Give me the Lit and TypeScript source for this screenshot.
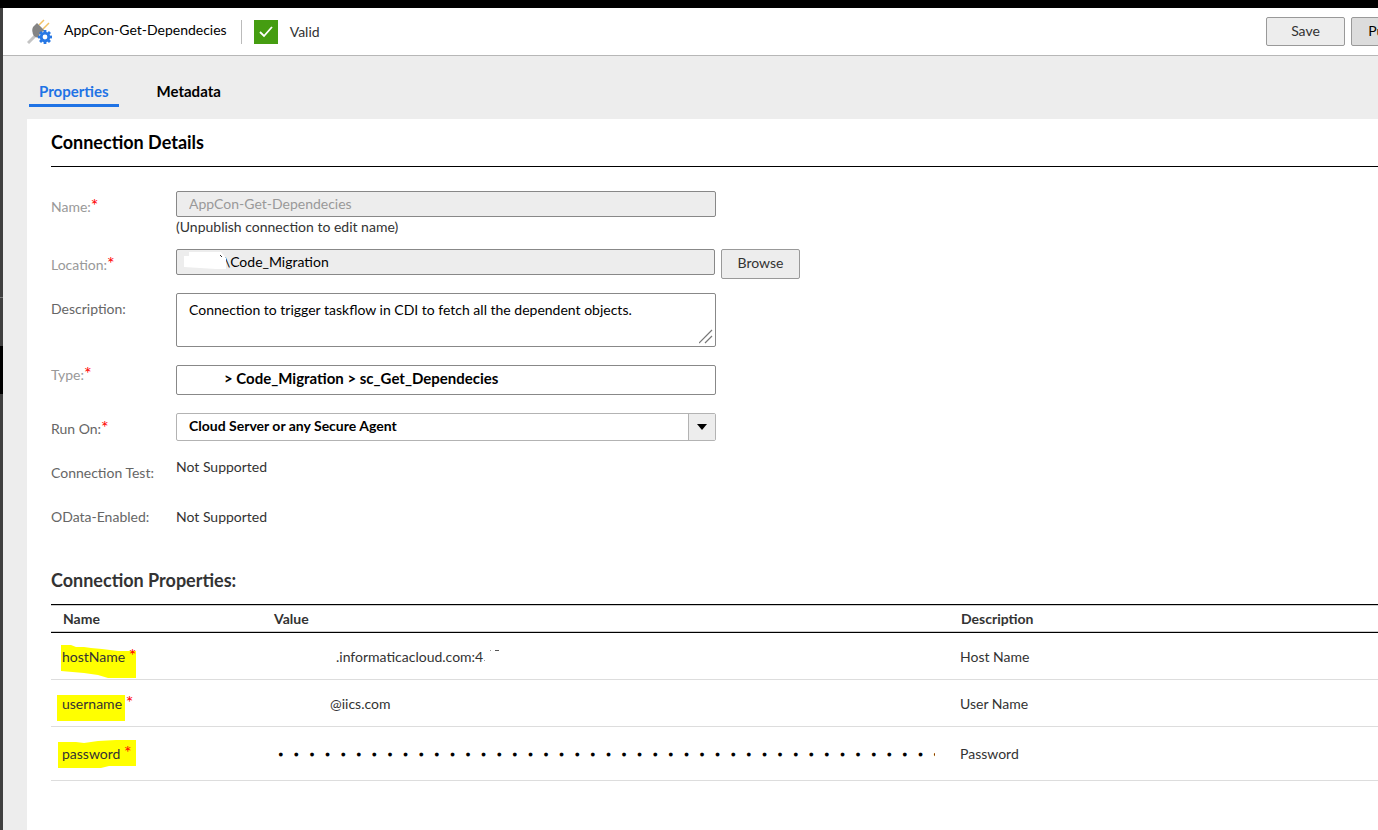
import { LitElement, html, css, svg } from "lit";
import { customElement } from "lit/decorators.js";

interface Property {
  name: string;
  value: string;
  description: string;
  kind: "host" | "user" | "password";
}

const properties: Property[] = [
  { name: "hostName", value: ".informaticacloud.com:4", description: "Host Name", kind: "host" },
  { name: "username", value: "@iics.com", description: "User Name", kind: "user" },
  { name: "password", value: "x".repeat(60), description: "Password", kind: "password" },
];

const teeth = [0, 45, 90, 135, 180, 225, 270, 315];

@customElement("app-root")
export class AppRoot extends LitElement {
  static styles = css`
    :host {
      display: grid;
      grid-template-columns: 3px minmax(0, 1fr);
      grid-template-rows: 8px minmax(0, 1fr);
      min-height: 100vh;
      box-sizing: border-box;
      overflow: hidden;
      background: #ededed;
      color: #333;
      font: 14px/18px Lato, "Open Sans", sans-serif;
    }
    * { box-sizing: border-box; }
    button, input, textarea, select { font: inherit; color: #000; margin: 0; }
    .frame { grid-column: 1 / -1; background: #000; }
    .rail {
      display: grid;
      grid-template-rows: 289px 1px 48px 48px 1fr;
      background: #404040;
    }
    .rail-line { grid-row: 2; background: #777; }
    .rail-active { grid-row: 4; background: #000; }
    .page { display: flex; flex-direction: column; min-width: 0; }
    .header {
      display: flex;
      align-items: center;
      height: 48px;
      padding-left: 24px;
      background: #fff;
      border-bottom: 1px solid #b7b7b7;
      overflow: hidden;
      white-space: nowrap;
    }
    .logo { width: 26px; height: 26px; flex: none; }
    .title { margin: 0 0 4px 11px; font-size: 14px; font-weight: 400; color: #000; }
    .status {
      display: flex;
      align-items: center;
      gap: 12px;
      height: 24px;
      margin-left: 14px;
      padding-left: 12px;
      border-left: 1px solid #bbb;
    }
    .check { width: 24px; height: 24px; background: #459d11; }
    .actions { display: flex; gap: 6px; margin-left: auto; margin-right: -52px; }
    .button {
      flex: none;
      width: 79px;
      height: 30px;
      padding: 0 0 2px;
      background: #ededed;
      border: 1px solid #999;
      border-radius: 2px;
      color: #333;
    }
    .header .button { height: 29px; }
    .button.primary { background: #dcdcdc; color: #000; }
    .tabs { display: flex; gap: 28px; height: 63px; padding: 22px 0 12px 26px; font-size: 15px; }
    .tab {
      padding: 4px 10px 0;
      height: 29px;
      border-bottom: 3px solid transparent;
      color: #000;
      font-weight: 700;
      text-decoration: none;
    }
    .selected { color: #1f73e5; border-color: #1f73e5; }
    .panel { flex: 1; margin-left: 24px; padding-left: 24px; background: #fff; }
    .heading {
      margin: 0;
      padding: 12px 0;
      border-bottom: 1px solid #000;
      font-size: 18px;
      line-height: 23px;
      font-weight: 700;
      color: #000;
    }
    .form { padding-top: 24px; }
    .row { display: grid; grid-template-columns: 125px minmax(0, 1fr); align-items: start; }
    .label { padding-top: 7px; color: #666; }
    .label.muted { color: #999; }
    .star { color: #f00; font-size: 18px; line-height: 0; }
    .field {
      display: block;
      width: 540px;
      height: 26px;
      padding: 0 12px 2px;
      background: #fff;
      border: 1px solid #888;
      border-radius: 2px;
    }
    .disabled { background: #ededed; }
    .disabled:disabled { color: #999; }
    .name-row { height: 58px; }
    .hint { display: block; padding-top: 1px; }
    .location-row { height: 44px; }
    .location { display: flex; gap: 6px; align-items: flex-start; position: relative; }
    .location .field { width: 539px; padding-left: 47px; }
    .mask { position: absolute; left: 8px; top: 3px; width: 42px; height: 17px; }
    .description-row { height: 72px; }
    .area { position: relative; width: 540px; }
    .area .field { height: 54px; padding: 7px 12px; resize: none; }
    .grip { position: absolute; right: 2px; bottom: 3px; width: 15px; height: 15px; pointer-events: none; }
    .type-row { height: 48px; }
    .type-row .label { padding-top: 1px; }
    .type-row .field { height: 30px; padding-left: 47px; padding-bottom: 4px; font-weight: 700; font-size: 15px; }
    .run-row { height: 44px; }
    .run-row .field {
      height: 28px;
      appearance: none;
      border-color: #b3b3b3;
      font-weight: 700;
    }
    .select { position: relative; width: 540px; }
    .arrow {
      position: absolute;
      top: 1px;
      right: 1px;
      width: 27px;
      height: 26px;
      background: #ededed;
      border-left: 1px solid #b3b3b3;
      pointer-events: none;
    }
    .test-row { height: 50px; }
    .odata-row { height: 62px; }
    .static { padding-top: 1px; }
    .odata-row .label { padding-top: 1px; }
    .subheading { margin: 0; font-size: 18px; line-height: 23px; font-weight: 700; padding-bottom: 12px; }
    .table { width: 100%; border-collapse: separate; border-spacing: 0; table-layout: fixed; }
    .name-col { width: 211px; }
    .value-col { width: 687px; }
    .table th {
      height: 29px;
      padding: 0 12px;
      text-align: left;
      font-weight: 700;
      border-top: 1px solid #000;
      border-bottom: 1px solid #000;
      box-shadow: inset 0 1px #ccc, inset 0 -1px #ccc;
    }
    .table td { height: 47px; padding: 2px 11px 0; border-bottom: 1px solid #ddd; }
    .table .password td { height: 54px; padding-bottom: 2px; }
    .key { position: relative; display: inline-block; }
    .key-text { position: relative; }
    .marker { position: absolute; left: -6px; top: -6px; width: 84px; height: 36px; }
    .value { display: block; width: 662px; height: 20px; padding: 0 0 2px; border: 0; background: none; color: #333; }
    .value.host {
      padding-left: 63px;
      background:
        linear-gradient(#555, #555) 222px 3px / 4px 1px no-repeat,
        linear-gradient(#999, #999) 217px 3px / 1px 1px no-repeat,
        linear-gradient(#999, #999) 211px 13px / 1px 1px no-repeat;
    }
    .value.user { padding-left: 57px; }
    .value.password {
      height: 24px;
      padding: 4px 0 0;
      color: #000;
      font-family: "Liberation Mono", monospace;
      font-size: 26px;
      -webkit-text-stroke: 3px #fff;
    }
  `;

  private logo() {
    return svg`<svg class="logo" viewBox="0 0 26 26" aria-hidden="true">
      <path d="M1 24 L8 17" stroke="#c4c4c4" stroke-width="3"/>
      <path d="M12 6 17 1M16 10 22 4" stroke="#f2c265" stroke-width="1.5"/>
      <path d="M10 4 19 13 15 18Q10 20 7 17Q4 12 6 8Z" fill="#848484"/>
      <circle cx="18" cy="18" r="6" fill="#fff"/>
      <g fill="#2878e4">${teeth.map((a) => svg`<rect x="16.6" y="11" width="2.8" height="3" transform="rotate(${a} 18 18)"/>`)}</g>
      <circle cx="18" cy="18" r="3.8" fill="none" stroke="#2878e4" stroke-width="2.8"/>
    </svg>`;
  }

  private marker(kind: Property["kind"]) {
    const shapes = {
      host: "5,3 15,3 20,5 28,5 35,6 46,7 62,9 80,9 80,36 52,36 42,33 28,31 5,29",
      user: "1,6 69,6 69,32 1,32",
      password: "2,3 20,3 28,4 42,2 60,1 80,1 80,27 53,27 45,29 2,29",
    };
    return html`<svg class="marker" viewBox="0 0 84 36" aria-hidden="true">
      <polygon points=${shapes[kind]} fill="#ff0"/>
    </svg>`;
  }

  render() {
    return html`
      <div class="frame"></div>
      <div class="rail"><i class="rail-line"></i><i class="rail-active"></i></div>
      <main class="page">
        <header class="header">
          ${this.logo()}
          <h1 class="title">AppCon-Get-Dependecies</h1>
          <div class="status">
            <svg class="check" viewBox="0 0 24 24" aria-hidden="true">
              <path d="M6 12 10 16 18 7" fill="none" stroke="#fff" stroke-width="1.8"/>
            </svg>
            <span>Valid</span>
          </div>
          <div class="actions">
            <button class="button">Save</button>
            <button class="button primary">Publish</button>
          </div>
        </header>
        <nav class="tabs">
          <a class="tab selected" href="#properties">Properties</a>
          <a class="tab" href="#metadata">Metadata</a>
        </nav>
        <section class="panel">
          <h2 class="heading">Connection Details</h2>
          <form class="form">
            <div class="row name-row">
              <label class="label muted" for="name">Name:<span class="star">*</span></label>
              <div>
                <input class="field disabled" id="name" value="AppCon-Get-Dependecies" disabled />
                <span class="hint">(Unpublish connection to edit name)</span>
              </div>
            </div>
            <div class="row location-row">
              <label class="label muted" for="location">Location:<span class="star">*</span></label>
              <div class="location">
                <input class="field disabled" id="location" .value=${"\\Code_Migration"} readonly />
                <svg class="mask" viewBox="0 0 42 17" aria-hidden="true">
                  <path d="M0 4H5V0H37L42 6V17H32L0 15Z" fill="#fff"/>
                  <path d="M36 3 38 5" stroke="#333"/>
                </svg>
                <button class="button" type="button">Browse</button>
              </div>
            </div>
            <div class="row description-row">
              <label class="label" for="description">Description:</label>
              <div class="area">
                <textarea class="field" id="description" .value=${"Connection to trigger taskflow in CDI to fetch all the dependent objects."}></textarea>
                <svg class="grip" viewBox="0 0 15 15" aria-hidden="true">
                  <path d="M0 14 13 1M6 14 13 7" stroke="#777" stroke-width="1.2"/>
                </svg>
              </div>
            </div>
            <div class="row type-row">
              <label class="label muted" for="type">Type:<span class="star">*</span></label>
              <input class="field" id="type" value="> Code_Migration > sc_Get_Dependecies" readonly />
            </div>
            <div class="row run-row">
              <label class="label" for="run">Run On:<span class="star">*</span></label>
              <div class="select">
                <select class="field" id="run"><option>Cloud Server or any Secure Agent</option></select>
                <svg class="arrow" viewBox="0 0 26 26" aria-hidden="true"><path d="M8 10H18L13 16Z"/></svg>
              </div>
            </div>
            <div class="row test-row">
              <span class="label">Connection Test:</span><span class="static">Not Supported</span>
            </div>
            <div class="row odata-row">
              <span class="label">OData-Enabled:</span><span class="static">Not Supported</span>
            </div>
          </form>
          <h2 class="subheading">Connection Properties:</h2>
          <table class="table">
            <colgroup><col class="name-col" /><col class="value-col" /><col /></colgroup>
            <thead><tr><th>Name</th><th>Value</th><th>Description</th></tr></thead>
            <tbody>
              ${properties.map((p) => html`
                <tr class=${p.kind}>
                  <td>
                    <label class="key" for=${p.kind}>${this.marker(p.kind)}<span class="key-text">${p.name} <span class="star">*</span></span></label>
                  </td>
                  <td><input class="value ${p.kind}" id=${p.kind} type=${p.kind === "password" ? "password" : "text"} .value=${p.value} readonly /></td>
                  <td>${p.description}</td>
                </tr>`)}
            </tbody>
          </table>
        </section>
      </main>
    `;
  }
}
